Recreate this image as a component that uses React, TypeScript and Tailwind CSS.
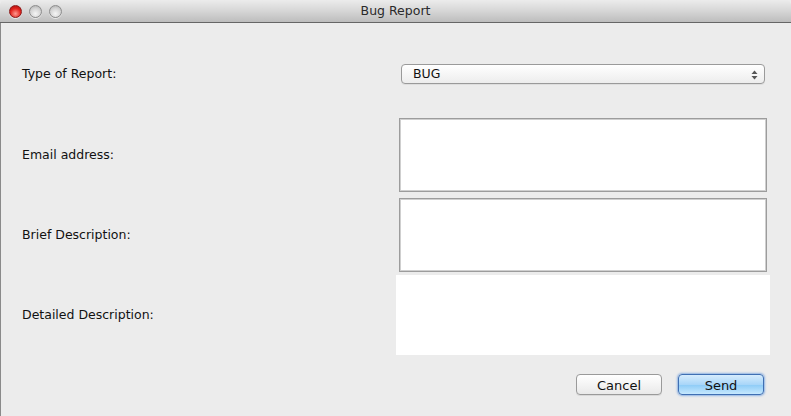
import { useState } from 'react';

const font = { fontFamily: '"DejaVu Sans", "Liberation Sans", sans-serif' };

function Light({ red }: { red?: boolean }) {
  return (
    <div
      className={`w-[13px] h-[13px] rounded-full border ${
        red
          ? 'border-[#8c1a1a] bg-[radial-gradient(circle_at_50%_70%,#ff9a90_0%,#e2241d_55%,#a00d0d_100%)]'
          : 'border-[#8d8d8d] bg-[radial-gradient(circle_at_50%_70%,#f6f6f6_0%,#d4d4d4_55%,#aaaaaa_100%)]'
      } shadow-[0_1px_0_rgba(255,255,255,0.6)]`}
    />
  );
}

function FieldRow({ label, children }: { label: string; children: React.ReactNode }) {
  return (
    <div className="flex items-center">
      <div className="flex-1 pl-[21px] text-[12.5px] text-[#111]">{label}</div>
      {children}
    </div>
  );
}

export default function App() {
  const [type, setType] = useState('BUG');

  return (
    <div className="w-[791px] h-[416px] bg-[#ececec] overflow-hidden" style={font}>
      {/* Title bar */}
      <div className="relative h-[23px] rounded-t-[5px] border-b border-[#666] bg-gradient-to-b from-[#ececec] via-[#d6d6d6] to-[#bdbdbd] flex items-center justify-center">
        <div className="absolute left-[9px] top-[5px] flex gap-[7px]">
          <Light red />
          <Light />
          <Light />
        </div>
        <span className="text-[12.5px] text-[#2a2a2a] pt-[1px]">Bug Report</span>
      </div>

      {/* Body */}
      <div className="h-[393px] border-l border-[#8a8a8a] pt-[41px] flex flex-col">
        <FieldRow label="Type of Report:">
          <div className="relative mr-[26px] w-[364px] h-[20px] rounded-[4px] border border-[#9a9a9a] bg-gradient-to-b from-[#ffffff] to-[#ededed] flex items-center shadow-[0_1px_0_rgba(0,0,0,0.06)]">
            <span className="pl-[11px] text-[12.5px] text-[#111]">{type}</span>
            <svg className="absolute right-[6px] top-[5px]" width="7" height="10" viewBox="0 0 7 10">
              <path d="M3.5 0.5 L6.5 4 L0.5 4 Z" fill="#555" />
              <path d="M3.5 9.5 L6.5 6 L0.5 6 Z" fill="#555" />
            </svg>
            <select
              className="absolute inset-0 opacity-0"
              value={type}
              onChange={(e) => setType(e.target.value)}
            >
              <option>BUG</option>
              <option>FEATURE</option>
            </select>
          </div>
        </FieldRow>

        <div className="mt-[34px]">
          <FieldRow label="Email address:">
            <div className="mr-[24px] w-[368px] h-[74px] bg-white border border-[#9c9c9c] shadow-[inset_0_0_0_1px_#cfcfcf]" />
          </FieldRow>
        </div>

        <div className="mt-[6px]">
          <FieldRow label="Brief Description:">
            <div className="mr-[24px] w-[368px] h-[74px] bg-white border border-[#9c9c9c] shadow-[inset_0_0_0_1px_#cfcfcf]" />
          </FieldRow>
        </div>

        <div className="mt-[3px]">
          <FieldRow label="Detailed Description:">
            <div className="mr-[21px] w-[374px] h-[80px] bg-white" />
          </FieldRow>
        </div>

        {/* Buttons */}
        <div className="mt-[19px] flex justify-end gap-[16px] pr-[27px]">
          <button className="w-[86px] h-[21px] rounded-[4px] border border-[#9a9a9a] bg-gradient-to-b from-[#ffffff] to-[#e9e9e9] text-[13px] text-[#111] leading-none pt-[1px] shadow-[0_1px_0_rgba(0,0,0,0.08)]">
            Cancel
          </button>
          <button className="w-[86px] h-[21px] rounded-[4px] border border-[#3f6fb3] bg-[linear-gradient(to_bottom,#d6ecfd_0%,#a9d6f9_50%,#8ccbf7_51%,#c6e8fe_100%)] text-[13px] text-[#111] leading-none pt-[1px] shadow-[0_0_2px_1px_rgba(80,140,220,0.6)]">
            Send
          </button>
        </div>
      </div>
    </div>
  );
}
